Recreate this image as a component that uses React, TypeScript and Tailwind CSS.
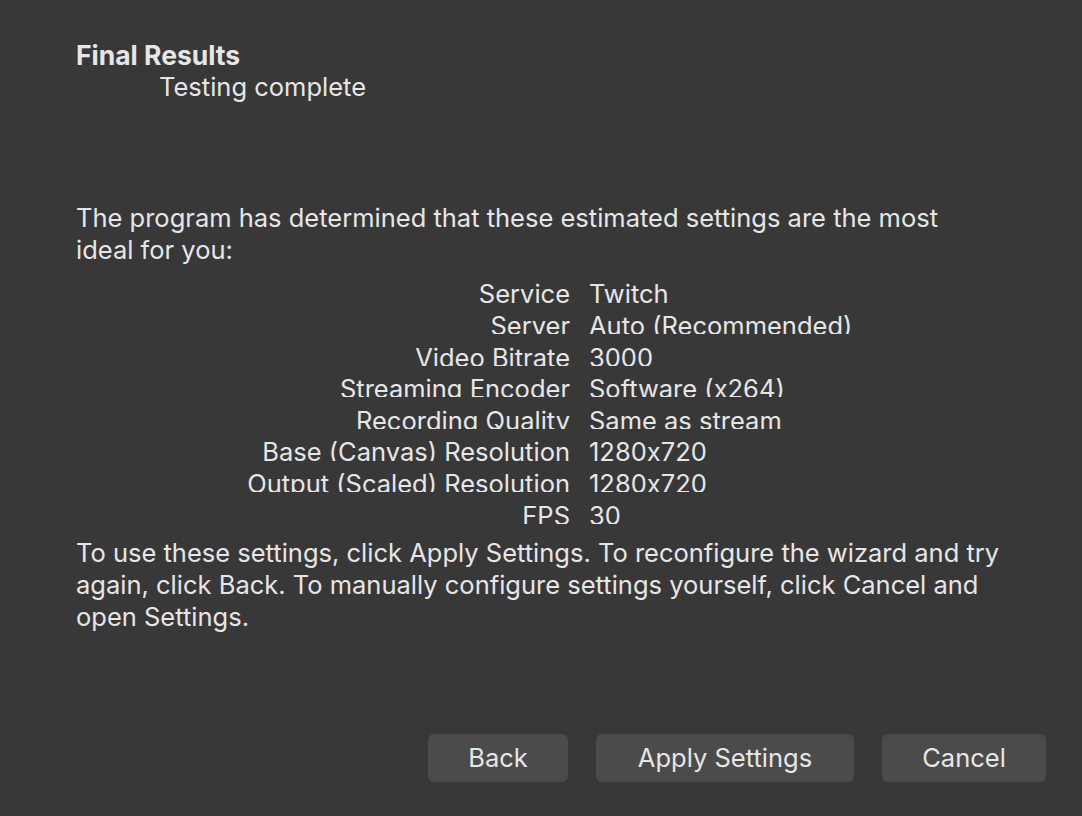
const rows: [string, string][] = [
  ["Service", "Twitch"],
  ["Server", "Auto (Recommended)"],
  ["Video Bitrate", "3000"],
  ["Streaming Encoder", "Software (x264)"],
  ["Recording Quality", "Same as stream"],
  ["Base (Canvas) Resolution", "1280x720"],
  ["Output (Scaled) Resolution", "1280x720"],
  ["FPS", "30"],
];

export default function App() {
  return (
    <div
      className="w-[1082px] h-[816px] bg-[#383838] text-[#e6e6e6] text-[25.5px] leading-[32px] flex flex-col [font-feature-settings:'calt'_0]"
      style={{ fontFamily: "Inter, 'Noto Sans', sans-serif" }}
    >
      {/* Header */}
      <div className="pl-[76px] pt-[39px]">
        <div className="font-bold text-[26.5px]">Final Results</div>
        <div className="pl-[83px]">Testing complete</div>
      </div>

      <p className="pl-[76px] pr-[82px] mt-[99px]">
        The program has determined that these estimated settings are the most ideal for you:
      </p>

      {/* Settings summary, rows are clipped at the baseline like the original */}
      <div className="mt-[5px] flex flex-col">
        {rows.map(([label, value]) => (
          <div key={label} className="h-[31.6px] overflow-hidden flex gap-[19px]">
            <div className="w-[570px] text-right leading-[26px] pt-[10.4px] shrink-0 whitespace-nowrap">{label}</div>
            <div className="leading-[26px] pt-[10.4px] whitespace-nowrap">{value}</div>
          </div>
        ))}
      </div>

      <p className="pl-[76px] pr-[80px] mt-[13.2px]">
        To use these settings, click Apply Settings. To reconfigure the wizard and try again, click Back. To
        manually configure settings yourself, click Cancel and open Settings.
      </p>

      {/* Buttons */}
      <div className="mt-auto mb-[34px] pr-[36px] flex justify-end gap-[28px]">
        <button className="w-[140px] h-[48px] rounded-[6px] bg-[#4b4b4b]">Back</button>
        <button className="w-[258px] h-[48px] rounded-[6px] bg-[#4b4b4b]">Apply Settings</button>
        <button className="w-[164px] h-[48px] rounded-[6px] bg-[#4b4b4b]">Cancel</button>
      </div>
    </div>
  );
}
